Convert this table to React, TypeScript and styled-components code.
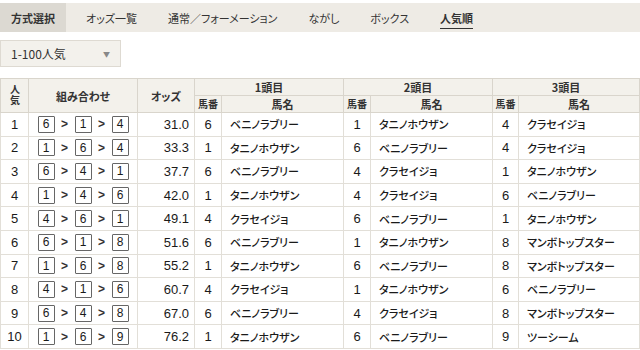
import React from 'react';
import styled, { createGlobalStyle } from 'styled-components';

const GlobalStyle = createGlobalStyle`
  body {
    margin: 0;
    background: #fff;
    color: #333;
    font-family: "Liberation Sans", "Noto Sans CJK JP", sans-serif;
    font-feature-settings: "palt";
  }
`;

interface Row {
  rank: number;
  combo: [number, number, number];
  odds: string;
  horses: [number, string][];
}

const NAMES: Record<number, string> = {
  1: 'タニノホウザン',
  4: 'クラセイジョ',
  6: 'ベニノラブリー',
  8: 'マンボトップスター',
  9: 'ツーシーム',
};

const raw: [number, number, number, string][] = [
  [6, 1, 4, '31.0'],
  [1, 6, 4, '33.3'],
  [6, 4, 1, '37.7'],
  [1, 4, 6, '42.0'],
  [4, 6, 1, '49.1'],
  [6, 1, 8, '51.6'],
  [1, 6, 8, '55.2'],
  [4, 1, 6, '60.7'],
  [6, 4, 8, '67.0'],
  [1, 6, 9, '76.2'],
];

const rows: Row[] = raw.map(([a, b, c, odds], i) => ({
  rank: i + 1,
  combo: [a, b, c],
  odds,
  horses: [a, b, c].map((n) => [n, NAMES[n]] as [number, string]),
}));

const tabs = ['方式選択', 'オッズ一覧', '通常／フォーメーション', 'ながし', 'ボックス', '人気順'];

const App = (): JSX.Element => {
  return (
    <Page>
      <GlobalStyle />
      <TabBar>
        {tabs.map((t, i) => (
          <Tab key={t} $active={i === 0}>
            <TabLabel $current={i === tabs.length - 1}>{t}</TabLabel>
          </Tab>
        ))}
      </TabBar>

      <Select>
        <span>1-100人気</span>
        <Caret>▼</Caret>
      </Select>

      <OddsTable>
        <colgroup>
          <col style={{ width: 28 }} />
          <col style={{ width: 109 }} />
          <col style={{ width: 57 }} />
          <col style={{ width: 27 }} />
          <col style={{ width: 122 }} />
          <col style={{ width: 27 }} />
          <col style={{ width: 122 }} />
          <col style={{ width: 26 }} />
          <col style={{ width: 121 }} />
        </colgroup>
        <thead>
          <tr>
            <Th rowSpan={2}>
              <Vertical>人気</Vertical>
            </Th>
            <Th rowSpan={2}>組み合わせ</Th>
            <Th rowSpan={2}>オッズ</Th>
            <Th colSpan={2}>1頭目</Th>
            <Th colSpan={2}>2頭目</Th>
            <Th colSpan={2}>3頭目</Th>
          </tr>
          <tr>
            <Th $small>馬番</Th>
            <Th>馬名</Th>
            <Th $small>馬番</Th>
            <Th>馬名</Th>
            <Th $small>馬番</Th>
            <Th>馬名</Th>
          </tr>
        </thead>
        <tbody>
          {rows.map((r) => (
            <tr key={r.rank}>
              <NumCell>{r.rank}</NumCell>
              <Td>
                <Combo>
                  {r.combo.map((n, i) => (
                    <React.Fragment key={i}>
                      {i > 0 && <Arrow>&gt;</Arrow>}
                      <NumBox>{n}</NumBox>
                    </React.Fragment>
                  ))}
                </Combo>
              </Td>
              <OddsCell>{r.odds}</OddsCell>
              {r.horses.map(([n, name], i) => (
                <React.Fragment key={i}>
                  <NumCell>{n}</NumCell>
                  <NameCell>{name}</NameCell>
                </React.Fragment>
              ))}
            </tr>
          ))}
        </tbody>
      </OddsTable>
    </Page>
  );
};

export default App;

const Page = styled.div`
  width: 640px;
  padding-top: 3px;
`;

const TabBar = styled.nav`
  display: flex;
  height: 29px;
  gap: 9px;
  background: #eeebe5;
`;

const Tab = styled.div<{ $active?: boolean }>`
  display: flex;
  align-items: center;
  padding: 0 11px;
  font-size: 11px;
  font-family: "Noto Sans CJK JP", sans-serif;
  font-weight: ${({ $active }) => ($active ? 700 : 400)};
  background: ${({ $active }) => ($active ? '#dcd9d2' : 'transparent')};
  color: #333;
`;

const TabLabel = styled.span<{ $current?: boolean }>`
  font-weight: ${({ $current }) => ($current ? 700 : 'inherit')};
  border-bottom: ${({ $current }) => ($current ? '1.5px solid #333' : 'none')};
  padding-bottom: ${({ $current }) => ($current ? '2px' : '0')};
  margin-top: ${({ $current }) => ($current ? '3px' : '0')};
`;

const Select = styled.div`
  display: flex;
  align-items: center;
  justify-content: space-between;
  box-sizing: border-box;
  width: 121px;
  height: 27px;
  margin-top: 8px;
  padding: 0 10px;
  background: #f3f1ec;
  border: 1px solid #dedad2;
  font-family: "Noto Sans CJK JP", sans-serif;
  font-size: 12px;
  color: #333;
`;

const Caret = styled.span`
  font-size: 7px;
  color: #888;
`;

const OddsTable = styled.table`
  width: 639px;
  margin-top: 11px;
  border-collapse: collapse;
  table-layout: fixed;
  border: 1px solid #d9d5cc;
`;

const Th = styled.th<{ $small?: boolean }>`
  height: 16px;
  padding: 0;
  background: #f3f1eb;
  border: 1px solid #d9d5cc;
  font-family: "Noto Sans CJK JP", sans-serif;
  font-size: ${({ $small }) => ($small ? '10px' : '11px')};
  font-weight: 700;
  line-height: 14px;
  color: #333;
  text-align: center;
`;

const Vertical = styled.span`
  display: inline-block;
  writing-mode: vertical-rl;
  font-feature-settings: normal;
  font-size: 10px;
  line-height: 12px;
  letter-spacing: 1px;
`;

const Td = styled.td`
  height: 22.6px;
  padding: 0;
  border: 1px solid #e2dfd8;
  vertical-align: middle;
`;

const NumCell = styled(Td)`
  text-align: center;
  font-size: 13px;
  color: #1a1a1a;
`;

const OddsCell = styled(Td)`
  text-align: right;
  padding-right: 5px;
  font-size: 13px;
  color: #1a1a1a;
`;

const NameCell = styled(Td)`
  padding-left: 8px;
  font-family: "Noto Sans CJK JP", sans-serif;
  font-size: 11px;
  font-weight: 500;
  color: #1a1a1a;
  white-space: nowrap;
`;

const Combo = styled.div`
  display: flex;
  align-items: center;
  justify-content: center;
`;

const NumBox = styled.span`
  display: flex;
  align-items: center;
  justify-content: center;
  box-sizing: border-box;
  width: 17px;
  height: 17px;
  border: 1px solid #666;
  border-radius: 1px;
  background: #fff;
  font-size: 12px;
  color: #1a1a1a;
`;

const Arrow = styled.span`
  width: 20px;
  text-align: center;
  font-size: 12px;
  font-weight: 700;
  color: #333;
`;
